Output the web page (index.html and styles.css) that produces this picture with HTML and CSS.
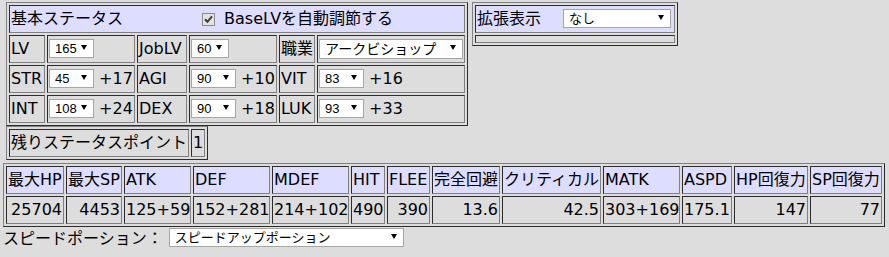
FILE: index.html
```html
<!DOCTYPE html>
<html lang="ja">
<head>
<meta charset="utf-8">
<title>ステータス</title>
<link rel="stylesheet" href="styles.css">
</head>
<body>
<div class="page">
  <div class="top">
    <div class="leftcol">
      <table class="tb base">
        <colgroup><col class="b1"><col class="b2"><col class="b3"><col class="b4"><col class="b5"><col class="b6"></colgroup>
        <tr>
          <td colspan="6" class="hd">基本ステータス<span class="chk"><svg width="13" height="13" viewBox="0 0 13 13"><rect x="0.5" y="0.5" width="12" height="12" fill="#e3e3e3" stroke="#8c8c8c"/><path d="M3 6.3 L5.4 8.8 L10 3.4" fill="none" stroke="#3a3a3a" stroke-width="2"/></svg></span>BaseLVを自動調節する</td>
        </tr>
        <tr>
          <td>LV</td>
          <td><span class="sel w45"><select><option>165</option></select></span></td>
          <td>JobLV</td>
          <td><span class="sel w38"><select><option>60</option></select></span></td>
          <td>職業</td>
          <td><span class="sel wjob"><select><option>アークビショップ</option></select></span></td>
        </tr>
        <tr>
          <td>STR</td>
          <td><span class="sel w45"><select><option>45</option></select></span> +17</td>
          <td>AGI</td>
          <td><span class="sel w45"><select><option>90</option></select></span> +10</td>
          <td>VIT</td>
          <td><span class="sel w45"><select><option>83</option></select></span> +16</td>
        </tr>
        <tr>
          <td>INT</td>
          <td><span class="sel w45"><select><option>108</option></select></span> +24</td>
          <td>DEX</td>
          <td><span class="sel w45"><select><option>90</option></select></span> +18</td>
          <td>LUK</td>
          <td><span class="sel w45"><select><option>93</option></select></span> +33</td>
        </tr>
      </table>
      <table class="tb remain">
        <colgroup><col class="r1"><col class="r2"></colgroup>
        <tr><td>残りステータスポイント</td><td>1</td></tr>
      </table>
    </div>
    <table class="tb ext">
      <colgroup><col class="e1"></colgroup>
      <tr><td class="hd">拡張表示<span class="sel wext"><select><option>なし</option></select></span></td></tr>
      <tr><td class="empty"></td></tr>
    </table>
  </div>
  <table class="tb stats">
    <colgroup>
      <col class="s1"><col class="s2"><col class="s3"><col class="s4"><col class="s5"><col class="s6"><col class="s7"><col class="s8"><col class="s9"><col class="s10"><col class="s11"><col class="s12"><col class="s13">
    </colgroup>
    <tr class="head">
      <td>最大HP</td><td>最大SP</td><td>ATK</td><td>DEF</td><td>MDEF</td><td>HIT</td><td>FLEE</td><td>完全回避</td><td>クリティカル</td><td>MATK</td><td>ASPD</td><td>HP回復力</td><td>SP回復力</td>
    </tr>
    <tr class="vals">
      <td>25704</td><td>4453</td><td class="l">125+59</td><td class="l">152+281</td><td class="l">214+102</td><td class="l">490</td><td>390</td><td>13.6</td><td>42.5</td><td class="l">303+169</td><td class="l">175.1</td><td>147</td><td>77</td>
    </tr>
  </table>
  <div class="speed">スピードポーション：<span class="sel wspeed"><select><option>スピードアップポーション</option></select></span></div>
</div>
</body>
</html>
```

FILE: styles.css
```css
html, body {
  margin: 0;
  padding: 0;
  background: #dddddd;
}
body {
  font-family: "DejaVu Sans", "Noto Sans CJK JP", sans-serif;
  font-size: 16px;
  line-height: 24px;
  color: #000;
}
.page {
  padding: 2px 0 0 3px;
}
.top {
  display: flex;
  align-items: flex-start;
  gap: 4px;
  margin-left: 3px;
}
.tb {
  border: 1px outset gray;
  border-collapse: separate;
  border-spacing: 2px;
  table-layout: fixed;
}
.tb td {
  border: 1px inset gray;
  padding: 1px;
  white-space: nowrap;
  vertical-align: top;
  text-align: left;
}
.hd, .head td {
  background: #ddddff;
}
.base { width: 462px; }
.b1 { width: 36px; }
.b2 { width: 88px; }
.b3 { width: 50px; }
.b4 { width: 88px; }
.b5 { width: 36px; }
.b6 { width: 148px; }

.remain { width: 202px; }
.r1 { width: 180px; }
.r2 { width: 14px; }

.ext { width: 206px; }
.e1 { width: 200px; }
.tb td.empty { padding: 1px; height: 4px; line-height: 0; font-size: 0; }

.chk {
  display: inline-block;
  vertical-align: top;
  width: 13px;
  height: 13px;
  margin: 6px 9px 0 79px;
}
.chk svg { display: block; }

.stats { width: 882px; margin-top: 3px; }
.s1 { width: 58px; }
.s2 { width: 56px; }
.s3 { width: 67px; }
.s4 { width: 77px; }
.s5 { width: 77px; }
.s6 { width: 34px; }
.s7 { width: 43px; }
.s8 { width: 68px; }
.s9 { width: 99px; }
.s10 { width: 77px; }
.s11 { width: 50px; }
.s12 { width: 74px; }
.s13 { width: 72px; }
.vals td { text-align: right; }
.vals td.l { text-align: left; }

.sel {
  position: relative;
  display: inline-block;
  vertical-align: top;
  margin-top: 2px;
  height: 19px;
}
.sel select {
  -webkit-appearance: none;
  appearance: none;
  display: block;
  box-sizing: border-box;
  width: 100%;
  height: 19px;
  margin: 0;
  padding: 0 0 0 5px;
  border: 1px solid #a6a6a6;
  border-radius: 0;
  background: #fff;
  color: #000;
  font-family: "Liberation Sans", "Noto Sans CJK JP", sans-serif;
  font-size: 13px;
  line-height: 17px;
}
.sel::after {
  content: "";
  position: absolute;
  right: 7px;
  top: 6px;
  width: 0;
  height: 0;
  border-left: 3px solid transparent;
  border-right: 3px solid transparent;
  border-top: 5px solid #000;
  pointer-events: none;
}
.w45 { width: 45px; }
.w38 { width: 38px; }
.wjob { width: 144px; height: 20px; }
.wjob select { height: 20px; font-size: 14px; }
.wext { width: 108px; margin-left: 22px; }
.wspeed { width: 235px; margin-left: 6px; margin-top: 1px; }

.speed {
  height: 30px;
  line-height: 24px;
  padding-left: 0;
}
```
